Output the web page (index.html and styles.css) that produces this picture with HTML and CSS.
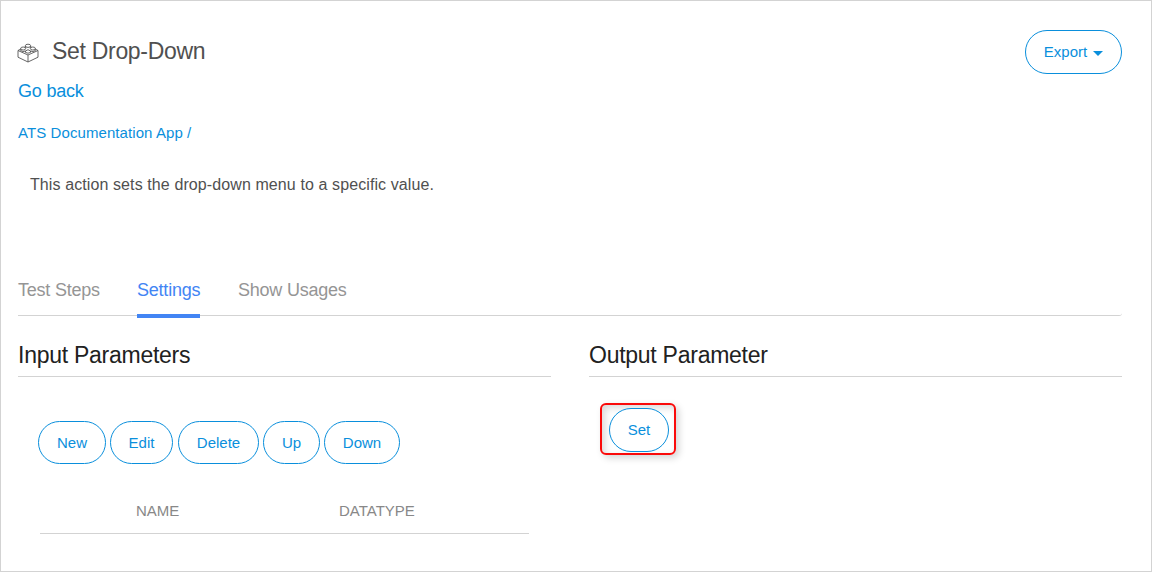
FILE: index.html
```html
<!DOCTYPE html>
<html lang="en">
<head>
<meta charset="utf-8">
<title>Set Drop-Down</title>
<link rel="stylesheet" href="styles.css">
</head>
<body>
<main class="page">
  <header class="header">
    <div class="heading">
      <h1 class="title">
        <svg class="brick" viewBox="0 0 22 20" aria-hidden="true">
          <path d="M3.5 6.2 L1 7.5 L11 12 L21 7.5 L18.5 6.2 M1 7.5 V14.2 L11 19 L21 14.2 V7.5 M11 12 V19"/>
          <path d="M8.3 3 V5.2 M13.7 3 V5.2 M3.7 5.5 V7.6 Q6 9.4 8.6 8 M18.3 5.5 V7.6 Q16 9.4 13.4 8"/>
          <ellipse cx="11" cy="2.8" rx="2.7" ry="1.6"/>
          <ellipse cx="6.2" cy="5.5" rx="2.5" ry="1.5"/>
          <ellipse cx="15.8" cy="5.5" rx="2.5" ry="1.5"/>
          <path d="M8.5 8 Q11 5.4 13.5 8 V9.4 Q11 11 8.5 9.4 Z"/>
        </svg>
        <span class="title-text">Set Drop-Down</span>
      </h1>
      <a class="back">Go back</a>
      <a class="crumb">ATS Documentation App /</a>
    </div>
    <button class="btn export"><span class="label-export">Export</span><svg class="caret" viewBox="0 0 10 5" aria-hidden="true"><path d="M0 0H10L5 5Z"/></svg></button>
  </header>
  <p class="description">This action sets the drop-down menu to a specific value.</p>
  <nav class="tabs">
    <a class="tab tab-steps">Test Steps</a>
    <a class="tab active">Settings</a>
    <a class="tab tab-usages">Show Usages</a>
  </nav>
  <div class="columns">
    <section>
      <h2 class="section-title">Input Parameters</h2>
      <div class="toolbar">
        <button class="btn new">New</button>
        <button class="btn edit">Edit</button>
        <button class="btn delete">Delete</button>
        <button class="btn up">Up</button>
        <button class="btn down">Down</button>
      </div>
      <div class="table-head">
        <span class="col-name">NAME</span>
        <span class="col-type">DATATYPE</span>
      </div>
    </section>
    <section>
      <h2 class="section-title">Output Parameter</h2>
      <div class="highlight"><button class="btn set">Set</button></div>
    </section>
  </div>
</main>
</body>
</html>
```
FILE: styles.css
```css
* { box-sizing: border-box; }
body { margin: 0; font-family: "Liberation Sans", Arial, sans-serif; background: #fff; }
.page { width: 1152px; height: 572px; border: 1px solid #d3d3d3; padding: 29px 29px 0 17px; overflow: hidden; }
.header { display: flex; justify-content: space-between; align-items: flex-start; height: 126px; }
.heading { display: flex; flex-direction: column; align-items: flex-start; }
.title { display: flex; margin: 0; padding-top: 7px; font-size: 23px; line-height: 28px; font-weight: 400; color: #505050; white-space: nowrap; }
.title-text { letter-spacing: -0.3px; }
.brick { width: 22px; height: 20px; margin: 6px 13px 0 -1px; fill: none; stroke: #555; stroke-width: .9; }
.back { margin-top: 15px; font-size: 18px; line-height: 22px; color: #0a8fdc; letter-spacing: -0.2px; }
.crumb { margin-top: 21px; font-size: 15px; line-height: 20px; color: #0a8fdc; letter-spacing: 0.08px; }
.btn { display: flex; align-items: center; justify-content: center; height: 43px; padding: 0; border: 1px solid #0a8fdc; border-radius: 22px; background: #fff; color: #0a8fdc; font: 15px "Liberation Sans", Arial, sans-serif; }
.export { width: 97px; height: 44px; gap: 6px; padding-bottom: 2px; }
.caret { width: 10px; height: 5px; margin-top: 5px; fill: #0a8fdc; }
.description { margin: 0 0 0 12px; padding-top: 19px; height: 123px; font-size: 16px; line-height: 20px; color: #505050; letter-spacing: 0.1px; }
.tabs { display: flex; height: 37px; border-bottom: 1px solid #d3d3d3; border-bottom-right-radius: 3px; font-size: 18px; line-height: 22px; letter-spacing: -0.22px; color: #959595; white-space: nowrap; }
.tab { height: 39px; }
.tab-steps { width: 119px; }
.active { width: 63px; margin-right: 38px; color: #4285f4; border-bottom: 4px solid #4285f4; }
.columns { display: grid; grid-template-columns: 533px 533px; gap: 38px; padding-top: 23px; }
.section-title { margin: 0; height: 38px; border-bottom: 1px solid #d3d3d3; font-size: 23px; line-height: 32px; font-weight: 400; letter-spacing: -0.26px; color: #212121; }
.toolbar { display: flex; padding: 44px 0 0 20px; }
.new { width: 68px; margin-right: 4px; }
.edit { width: 63px; margin-right: 5px; }
.delete { width: 81px; margin-right: 4px; }
.up { width: 57px; margin-right: 4px; }
.down { width: 76px; }
.table-head { display: flex; width: 489px; height: 33px; margin: 37px 0 0 22px; padding-left: 96px; border-bottom: 1px solid #d3d3d3; font-size: 15px; line-height: 20px; color: #888; }
.col-name { width: 203px; }
.highlight { display: flex; align-items: flex-start; width: 76px; height: 52px; margin: 26px 0 0 11px; padding: 3px 0 0 7px; border: 2px solid #fa0a0a; border-radius: 6px; box-shadow: 3px 3px 7px rgba(0,0,0,.17), inset 3px 3px 7px rgba(0,0,0,.15); }
.set { width: 60px; height: 44px; padding-bottom: 2px; }
```
